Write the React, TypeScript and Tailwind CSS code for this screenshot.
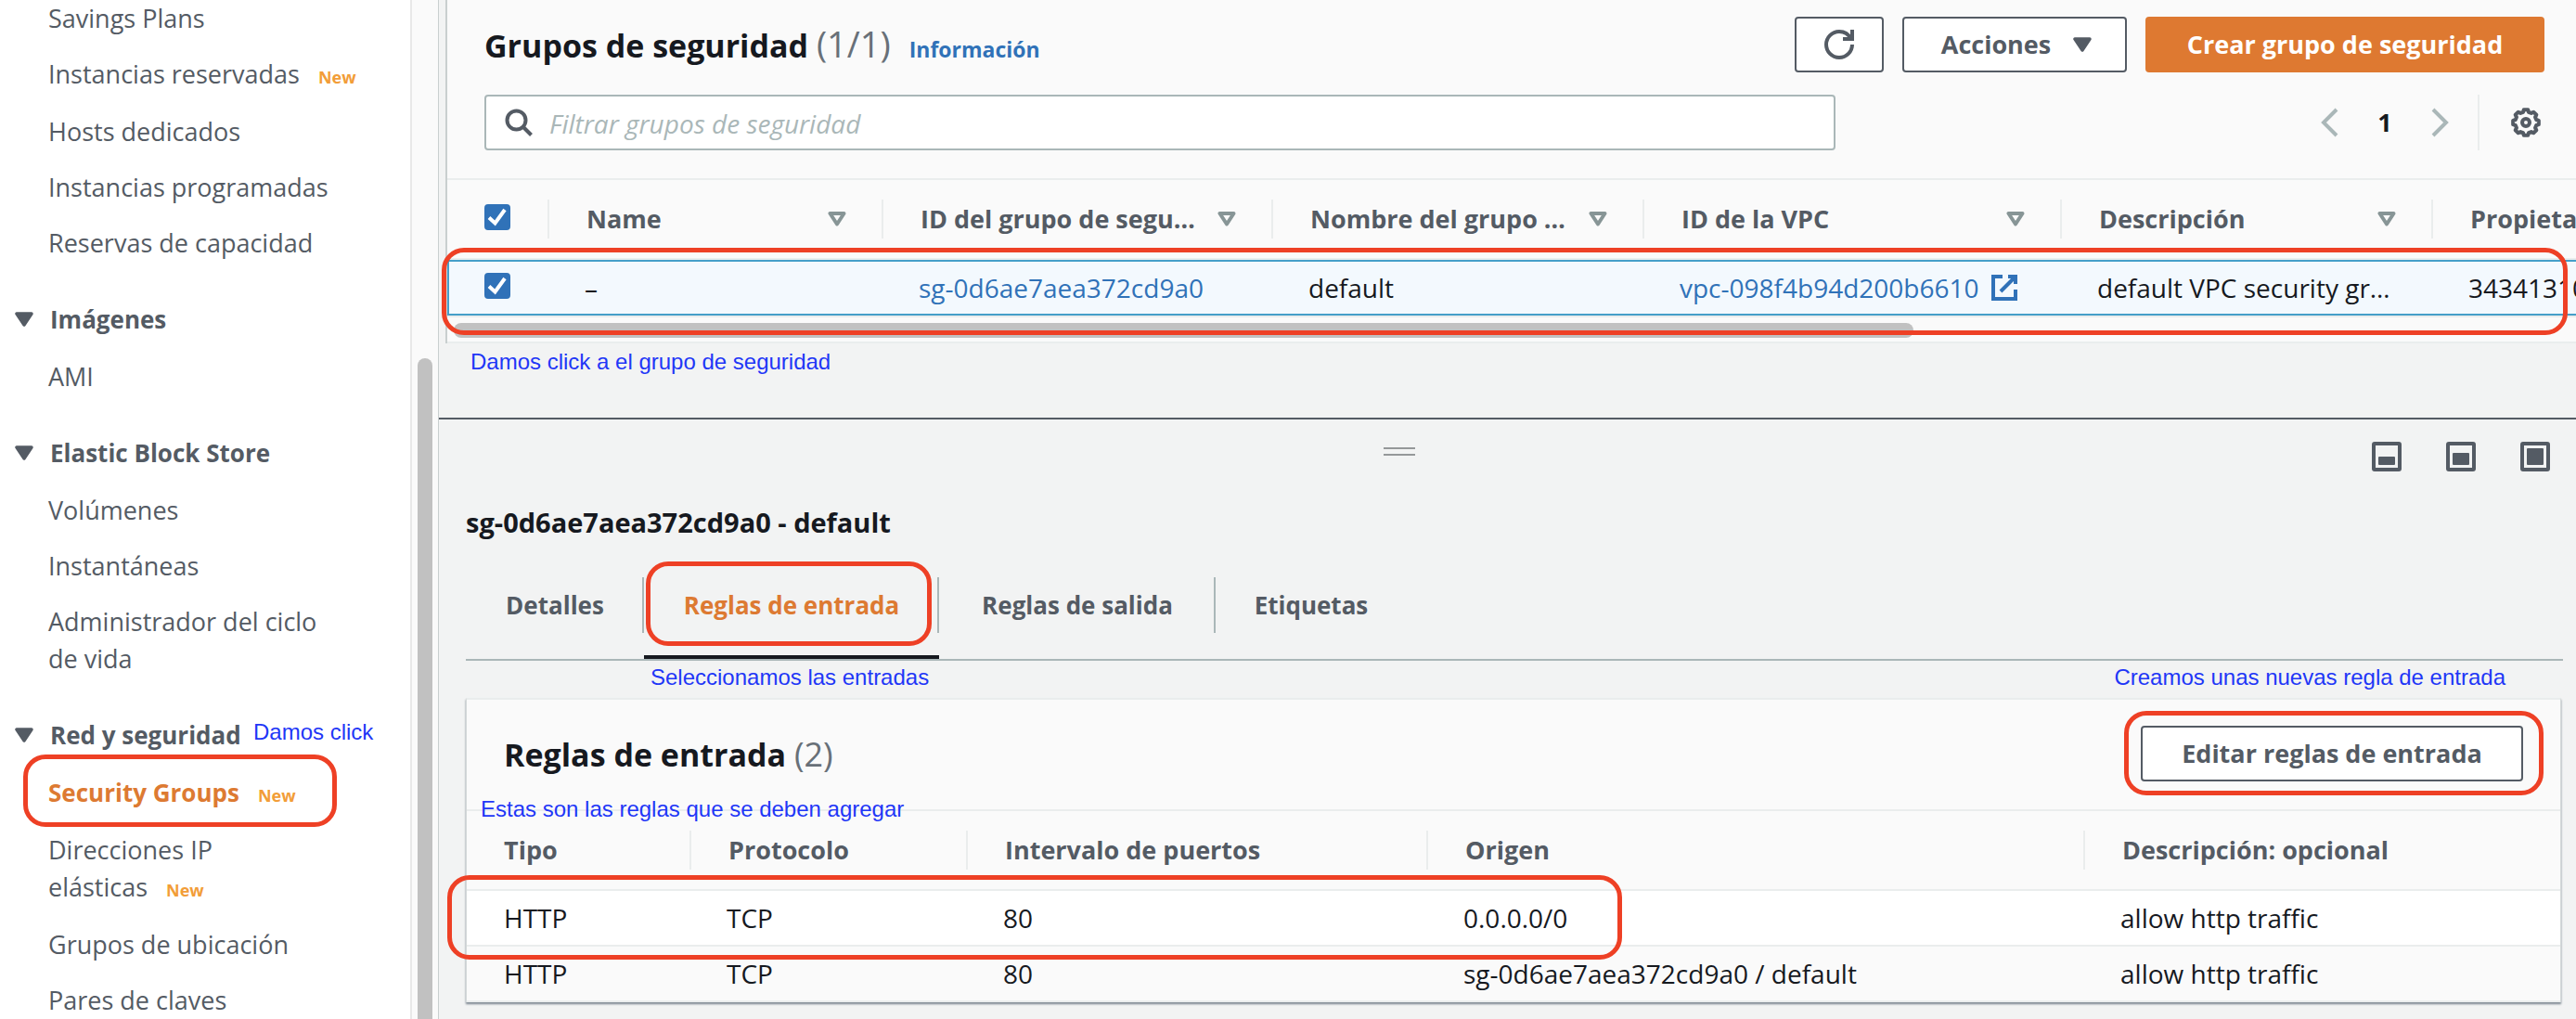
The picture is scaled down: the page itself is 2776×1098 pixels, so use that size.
import { Fragment, type ReactNode } from "react";

type NavItem = { lines: string[]; isNew?: boolean; active?: boolean };
type NavSection = { title?: string; note?: string; items: NavItem[] };

const NAV: NavSection[] = [
  {
    items: [
      { lines: ["Savings Plans"] },
      { lines: ["Instancias reservadas"], isNew: true },
      { lines: ["Hosts dedicados"] },
      { lines: ["Instancias programadas"] },
      { lines: ["Reservas de capacidad"] },
    ],
  },
  { title: "Imágenes", items: [{ lines: ["AMI"] }] },
  {
    title: "Elastic Block Store",
    items: [
      { lines: ["Volúmenes"] },
      { lines: ["Instantáneas"] },
      { lines: ["Administrador del ciclo", "de vida"] },
    ],
  },
  {
    title: "Red y seguridad",
    note: "Damos click",
    items: [
      { lines: ["Security Groups"], isNew: true, active: true },
      { lines: ["Direcciones IP", "elásticas"], isNew: true },
      { lines: ["Grupos de ubicación"] },
      { lines: ["Pares de claves"] },
    ],
  },
];

const GROUP_COLUMNS = [
  { label: "Name", width: "w-[360px]" },
  { label: "ID del grupo de segu…", width: "w-[420px]" },
  { label: "Nombre del grupo …", width: "w-[400px]" },
  { label: "ID de la VPC", width: "w-[450px]" },
  { label: "Descripción", width: "w-[400px]" },
  { label: "Propietario", width: "w-[400px]" },
];

const RULE_COLUMNS = [
  { label: "Tipo", width: "w-[242px]" },
  { label: "Protocolo", width: "w-[298px]" },
  { label: "Intervalo de puertos", width: "w-[496px]" },
  { label: "Origen", width: "w-[708px]" },
  { label: "Descripción: opcional", width: "" },
];

const RULES = [
  ["HTTP", "TCP", "80", "0.0.0.0/0", "allow http traffic"],
  ["HTTP", "TCP", "80", "sg-0d6ae7aea372cd9a0 / default", "allow http traffic"],
];

const TABS = [
  { label: "Detalles", width: "w-[192px]" },
  { label: "Reglas de entrada", width: "w-[318px]", active: true },
  { label: "Reglas de salida", width: "w-[298px]" },
  { label: "Etiquetas", width: "w-[206px]" },
];

function Highlight({ className }: { className: string }) {
  return (
    <span
      aria-hidden="true"
      className={`pointer-events-none absolute z-10 rounded-[24px] border-[5px] border-[#ee4025] ${className}`}
    />
  );
}

function Note({ children, className = "" }: { children: ReactNode; className?: string }) {
  return (
    <span
      className={`whitespace-nowrap font-['Liberation_Sans',sans-serif] text-[24px] font-normal leading-[28px] text-[#1f37f7] ${className}`}
    >
      {children}
    </span>
  );
}

function CaretDown() {
  return (
    <svg viewBox="0 0 20 16" className="h-4 w-5 shrink-0" aria-hidden="true">
      <path d="M2 2h16l-8 12z" fill="#545b64" stroke="#545b64" strokeWidth="3.5" strokeLinejoin="round" />
    </svg>
  );
}

function SortIcon() {
  return (
    <svg viewBox="0 0 20 16" className="h-4 w-5 shrink-0" aria-hidden="true">
      <path d="M2.5 2h15L10 13.5z" fill="none" stroke="#879596" strokeWidth="4" strokeLinejoin="round" />
    </svg>
  );
}

function RefreshIcon() {
  return (
    <svg viewBox="0 0 16 16" className="size-8" fill="none" stroke="#545b64" strokeWidth="2" aria-hidden="true">
      <path d="M15 8c0 3.87-3.13 7-7 7s-7-3.13-7-7 3.13-7 7-7c2.79 0 5.2 1.63 6.33 4" />
      <path d="M10 5h5V0" />
    </svg>
  );
}

function SearchIcon() {
  return (
    <svg viewBox="0 0 30 30" className="size-[30px] shrink-0" fill="none" stroke="#545b64" strokeWidth="4" aria-hidden="true">
      <circle cx="12.5" cy="12.5" r="10" />
      <path d="M19.5 19.5 28.5 28.5" />
    </svg>
  );
}

function ChevronIcon({ d }: { d: string }) {
  return (
    <svg viewBox="0 0 32 32" className="size-8" fill="none" stroke="#aab7b8" strokeWidth="4" aria-hidden="true">
      <path d={d} />
    </svg>
  );
}

const GEAR_POINTS = Array.from({ length: 8 }, (_, i) => i * 45)
  .flatMap((a) => [
    [a - 9, 14],
    [a + 9, 14],
    [a + 15, 11.6],
    [a + 30, 11.6],
  ])
  .map(([deg, r]) => {
    const t = (deg * Math.PI) / 180;
    return `${(16 + r * Math.cos(t)).toFixed(2)},${(16 + r * Math.sin(t)).toFixed(2)}`;
  })
  .join(" ");

function GearIcon() {
  return (
    <svg viewBox="0 0 32 32" className="size-8" fill="none" stroke="#545b64" strokeWidth="4" strokeLinejoin="round" aria-hidden="true">
      <polygon points={GEAR_POINTS} />
      <circle cx="16" cy="16" r="4" />
    </svg>
  );
}

function ExternalIcon() {
  return (
    <svg viewBox="0 0 16 16" className="size-8" fill="none" stroke="#3072b8" strokeWidth="2" aria-hidden="true">
      <path d="M10 2h4v4M6 10l8-8M14 9.05V14H2V2h5" />
    </svg>
  );
}

function PanelIcon({ top }: { top: number }) {
  return (
    <svg viewBox="0 0 32 32" className="size-8" aria-hidden="true">
      <rect x="2" y="2" width="28" height="28" rx="1" fill="none" stroke="#545b64" strokeWidth="4" />
      <rect x="7" y={top} width="18" height={25 - top} rx="1" fill="#545b64" />
    </svg>
  );
}

function Checkbox({ label }: { label: string }) {
  return (
    <label className="relative block size-7">
      <input
        type="checkbox"
        defaultChecked
        aria-label={label}
        className="peer block size-7 appearance-none rounded-[4px] border-2 border-[#879596] bg-white checked:border-[#3072b8] checked:bg-[#3072b8]"
      />
      <svg
        viewBox="0 0 28 28"
        className="pointer-events-none absolute inset-0 hidden size-7 peer-checked:block"
        fill="none"
        stroke="#fff"
        strokeWidth="4"
        aria-hidden="true"
      >
        <path d="M5 14.5 11.5 20.5 22 6" />
      </svg>
    </label>
  );
}

function Sidebar() {
  return (
    <aside className="flex w-[472px] shrink-0 bg-white">
      <nav className="flex w-[444px] flex-col gap-[42px] border-r-2 border-[#e8e8e8]">
        {NAV.map((section, i) => (
          <section key={i} className="flex flex-col gap-[22px]">
            {section.title && (
              <h3 className="relative flex items-center pl-4 text-[26px] font-bold leading-10">
                <button type="button" className="flex items-center gap-[18px]">
                  <CaretDown />
                  {section.title}
                </button>
                {section.note && <Note className="absolute left-[273px] top-[3px]">{section.note}</Note>}
              </h3>
            )}
            <ul className="flex flex-col gap-5">
              {section.items.map((item) => (
                <li key={item.lines[0]} className={`relative pl-[52px] leading-10 ${item.isNew ? "pb-[2px]" : ""}`}>
                  <a href="#" className={item.active ? "text-[26px] font-bold text-[#dd7a32]" : ""}>
                    {item.lines.map((line, n) => (
                      <Fragment key={line}>
                        {n > 0 && <br />}
                        {line}
                      </Fragment>
                    ))}
                  </a>
                  {item.isNew && <span className="ml-5 text-[18px] font-bold leading-none text-[#f29d38]">New</span>}
                  {item.active && <Highlight className="-top-[21px] left-[25px] h-[78px] w-[338px]" />}
                </li>
              ))}
            </ul>
          </section>
        ))}
      </nav>
      <div className="flex flex-1 flex-col bg-[#fafafa] px-[6px] pt-[386px]">
        <div className="flex-1 rounded-t-full bg-[#c1c1c1]" />
      </div>
    </aside>
  );
}

function GroupsTable() {
  const cell = "h-[60px] border-y-2 border-[#459fc9] bg-[#f3f9fe] p-0 pl-[38px]";
  return (
    <div className="relative">
      <div className="overflow-hidden">
        <table className="w-[2540px] table-fixed border-separate border-spacing-0 text-left">
          <thead>
            <tr>
              <th scope="col" className="h-[86px] w-[110px] border-b-2 border-[#eaeded] p-0">
                <div className="flex h-[42px] items-center border-r-2 border-[#eaeded] pb-1 pl-10">
                  <Checkbox label="Seleccionar todo" />
                </div>
              </th>
              {GROUP_COLUMNS.map((col) => (
                <th key={col.label} scope="col" className={`border-b-2 border-[#eaeded] p-0 ${col.width}`}>
                  <div className="flex h-[42px] items-center justify-between border-r-2 border-[#eaeded] pl-10 pr-[38px]">
                    {col.label}
                    <SortIcon />
                  </div>
                </th>
              ))}
            </tr>
          </thead>
          <tbody className="whitespace-nowrap text-[28px] text-[#16191f]">
            <tr>
              <td className="h-[60px] border-y-2 border-l-2 border-[#459fc9] bg-[#f3f9fe] p-0 pb-1 pl-[38px]">
                <Checkbox label="Seleccionar sg-0d6ae7aea372cd9a0" />
              </td>
              <td className={cell}>–</td>
              <td className={cell}>
                <a href="#" className="text-[#3072b8]">sg-0d6ae7aea372cd9a0</a>
              </td>
              <td className={cell}>default</td>
              <td className={cell}>
                <a href="#" className="flex items-center gap-3 text-[#3072b8]">
                  vpc-098f4b94d200b6610
                  <ExternalIcon />
                </a>
              </td>
              <td className={cell}>default VPC security gr…</td>
              <td className={cell}>34341310</td>
            </tr>
          </tbody>
        </table>
      </div>
      <div className="border-y-2 border-[#eaeded] px-[7px] pb-1 pt-[6px]">
        <div className="h-4 w-[69%] rounded-full bg-[#c1c1c1]" />
      </div>
      <Highlight className="-left-[6px] right-[9px] top-[73px] h-[94px]" />
    </div>
  );
}

function GroupsPanel() {
  const outlined = "h-[60px] rounded-[4px] border-2 border-[#545b64] bg-white font-bold";
  return (
    <section className="ml-[7px] border-l-2 border-[#c9cfcf] bg-[#fafafa]">
      <header className="border-b-2 border-[#eaeded] pb-[30px] pl-10 pr-[34px] pt-[18px]">
        <div className="flex h-[60px] items-center justify-between">
          <div className="flex items-baseline pt-1">
            <h1 className="text-[34px] font-bold leading-10 text-[#16191f]">
              Grupos de seguridad <span className="text-[38px] font-normal text-[#687078]">(1/1)</span>
            </h1>
            <a href="#" className="ml-5 text-[23px] font-bold text-[#3072b8]">Información</a>
          </div>
          <div className="flex gap-5">
            <button type="button" aria-label="Actualizar" className={`flex w-24 items-center justify-center ${outlined}`}>
              <RefreshIcon />
            </button>
            <button type="button" className={`flex w-[242px] items-center justify-center gap-6 pl-1 ${outlined}`}>
              Acciones
              <CaretDown />
            </button>
            <button type="button" className="h-[60px] w-[430px] rounded-[4px] bg-[#de7931] font-bold text-white">
              Crear grupo de seguridad
            </button>
          </div>
        </div>
        <div className="mt-6 flex h-[60px] items-center">
          <label className="flex h-full flex-1 items-center gap-[18px] rounded-[4px] border-2 border-[#aab7b8] bg-white pl-5">
            <SearchIcon />
            <input
              type="search"
              aria-label="Filtrar grupos de seguridad"
              placeholder="Filtrar grupos de seguridad"
              className="h-full flex-1 bg-transparent pt-[2px] text-[28px] outline-none placeholder:italic placeholder:text-[#aab7b8]"
            />
          </label>
          <div className="flex h-full w-[764px] items-center justify-end">
            <div className="flex items-center gap-7">
              <button type="button" aria-label="Página anterior"><ChevronIcon d="M24 2 10 16 24 30" /></button>
              <button type="button" className="w-8 font-bold text-[#16191f]">1</button>
              <button type="button" aria-label="Página siguiente"><ChevronIcon d="M8 2 22 16 8 30" /></button>
            </div>
            <div className="ml-6 mr-[34px] h-full w-[2px] bg-[#eaeded]" />
            <button type="button" aria-label="Preferencias" className="mr-1"><GearIcon /></button>
          </div>
        </div>
      </header>
      <GroupsTable />
    </section>
  );
}

function RulesCard() {
  return (
    <section className="relative mr-[2px] border-x border-t-2 border-x-[#d3d8d8] border-t-[#eaeded] bg-[#fafafa] shadow-[0_2px_2px_#7d8791]">
      <header className="flex items-center justify-between border-b-2 border-[#eaeded] pb-[30px] pl-10 pr-10 pt-7">
        <h2 className="pt-[2px] text-[34px] font-bold leading-10 text-[#16191f]">
          Reglas de entrada <span className="text-[36px] font-normal text-[#687078]">(2)</span>
        </h2>
        <div className="relative">
          <button type="button" className="h-[60px] w-[412px] rounded-[4px] border-2 border-[#545b64] bg-white font-bold">
            Editar reglas de entrada
          </button>
          <Highlight className="-left-[18px] -right-[22px] -top-4 h-[91px]" />
        </div>
      </header>
      <Note className="absolute left-[15px] top-[104px]">Estas son las reglas que se deben agregar</Note>
      <div className="relative">
        <table className="w-full table-fixed border-separate border-spacing-0 text-left">
          <thead>
            <tr>
              {RULE_COLUMNS.map((col, i) => (
                <th key={col.label} scope="col" className={`h-[86px] border-b-2 border-[#eaeded] p-0 ${col.width}`}>
                  <div
                    className={`flex h-[42px] items-center pl-10 ${
                      i < RULE_COLUMNS.length - 1 ? "border-r-2 border-[#eaeded]" : ""
                    }`}
                  >
                    {col.label}
                  </div>
                </th>
              ))}
            </tr>
          </thead>
          <tbody className="text-[28px] text-[#16191f]">
            {RULES.map((rule, r) => (
              <tr key={r} className={r === 0 ? "bg-white" : ""}>
                {rule.map((value, c) => (
                  <td key={c} className="h-[60px] border-b-2 border-[#eaeded] p-0 pl-[38px] first:pl-10">
                    {value}
                  </td>
                ))}
              </tr>
            ))}
          </tbody>
        </table>
        <Highlight className="-left-[21px] top-[69px] h-[91px] w-[1266px]" />
      </div>
    </section>
  );
}

function DetailPanel() {
  return (
    <section className="border-t-2 border-[#545b64]">
      <div className="flex items-start pt-6">
        <div className="flex flex-1 justify-center pt-[6px]">
          <div role="separator" className="h-[9px] w-[34px] border-y-2 border-[#959899]" />
        </div>
        <div className="flex gap-12 pl-[13px] pr-7">
          <button type="button" aria-label="Panel pequeño"><PanelIcon top={16} /></button>
          <button type="button" aria-label="Panel mediano"><PanelIcon top={12} /></button>
          <button type="button" aria-label="Panel grande"><PanelIcon top={7} /></button>
        </div>
      </div>
      <div className="pl-[29px] pr-[14px]">
        <h2 className="mt-[35px] text-[29px] font-bold leading-10 text-[#16191f]">sg-0d6ae7aea372cd9a0 - default</h2>
        <div role="tablist" className="mt-[39px] flex border-b-2 border-[#aab7b8]">
          {TABS.map((tab, i) => (
            <div key={tab.label} className={`relative h-[88px] ${tab.width}`}>
              <button
                type="button"
                role="tab"
                aria-selected={!!tab.active}
                className={`h-[88px] w-full border-b-4 pb-6 text-[26px] font-bold ${
                  tab.active ? "border-[#16191f] text-[#dd7a32]" : "border-transparent"
                }`}
              >
                {tab.label}
              </button>
              {i < TABS.length - 1 && <span className="absolute right-0 top-0 h-[60px] w-[2px] bg-[#aab7b8]" />}
              {tab.active && <Highlight className="-top-[17px] left-[2px] right-[8px] h-[91px]" />}
            </div>
          ))}
        </div>
        <div className="flex h-10 items-start justify-between pl-[199px] pr-[62px] pt-1">
          <Note>Seleccionamos las entradas</Note>
          <Note>Creamos unas nuevas regla de entrada</Note>
        </div>
        <RulesCard />
      </div>
    </section>
  );
}

export default function App() {
  return (
    <div className="flex min-h-screen overflow-hidden bg-[#f2f3f3] font-['Open_Sans','Noto_Sans',sans-serif] text-[27px] leading-10 text-[#545b64]">
      <Sidebar />
      <main className="min-w-0 flex-1 border-l border-[#c9cfcf]">
        <GroupsPanel />
        <div className="h-20 pl-[34px] pt-[6px]">
          <Note className="block">Damos click a el grupo de seguridad</Note>
        </div>
        <DetailPanel />
      </main>
    </div>
  );
}
